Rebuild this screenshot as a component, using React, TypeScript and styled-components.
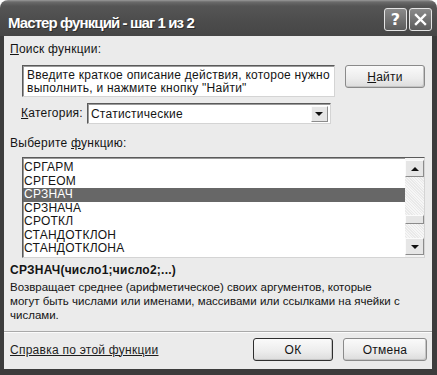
import React from 'react';
import styled, { createGlobalStyle, css } from 'styled-components';

const GlobalStyle = createGlobalStyle`
  html, body {
    margin: 0;
    padding: 0;
    background: #ffffff;
  }
  body {
    font-family: 'Liberation Sans', Arial, sans-serif;
    color: #141414;
  }
`;

const functionList = ['СРГАРМ', 'СРГЕОМ', 'СРЗНАЧ', 'СРЗНАЧА', 'СРОТКЛ', 'СТАНДОТКЛОН', 'СТАНДОТКЛОНА'];
const selectedFunction = 'СРЗНАЧ';

const descriptionLines = [
  'Возвращает среднее (арифметическое) своих аргументов, которые',
  'могут быть числами или именами, массивами или ссылками на ячейки с',
  'числами.',
];

const App = () => {
  return (
    <>
      <GlobalStyle />
      <Window>
        <TitleBar>
          <Title>Мастер функций - шаг 1 из 2</Title>
          <TitleButtons>
            <TitleButton>?</TitleButton>
            <TitleButton>
              <svg width="13" height="13" viewBox="0 0 13 13">
                <path d="M2 2 L11 11 M11 2 L2 11" stroke="#fff" strokeWidth="2.4" strokeLinecap="square" />
              </svg>
            </TitleButton>
          </TitleButtons>
        </TitleBar>
        <Frame>
          <Client>
            <Label>
              <Key>П</Key>оиск функции:
            </Label>
            <SearchRow>
              <SearchBox>
                Введите краткое описание действия, которое нужно выполнить, и нажмите кнопку "Найти"
              </SearchBox>
              <Button>
                <Key>Н</Key>айти
              </Button>
            </SearchRow>
            <CategoryRow>
              <Label>
                <Key>К</Key>атегория:
              </Label>
              <Select>
                <SelectValue>Статистические</SelectValue>
                <ArrowButton>
                  <Triangle $down />
                </ArrowButton>
              </Select>
            </CategoryRow>
            <ListLabel>
              Выберите <Key>ф</Key>ункцию:
            </ListLabel>
            <ListBox>
              <Items>
                {functionList.map((name) => (
                  <Item key={name} $selected={name === selectedFunction}>
                    {name}
                  </Item>
                ))}
              </Items>
              <ScrollBar>
                <ScrollButton>
                  <Triangle />
                </ScrollButton>
                <Track>
                  <Thumb />
                </Track>
                <ScrollButton>
                  <Triangle $down />
                </ScrollButton>
              </ScrollBar>
            </ListBox>
            <Signature>СРЗНАЧ(число1;число2;...)</Signature>
            <Description>
              {descriptionLines.map((line) => (
                <DescriptionLine key={line}>{line}</DescriptionLine>
              ))}
            </Description>
            <Separator />
            <Footer>
              <HelpLink>Справка по этой функции</HelpLink>
              <Buttons>
                <Button $default>ОК</Button>
                <Button $wide>Отмена</Button>
              </Buttons>
            </Footer>
          </Client>
        </Frame>
      </Window>
    </>
  );
};

export default App;

const sunken = css`
  box-sizing: border-box;
  background: #ffffff;
  border-top: 1px solid #5a5a5a;
  border-left: 1px solid #5a5a5a;
  border-right: 1px solid #d4d4d4;
  border-bottom: 1px solid #d4d4d4;
  box-shadow: inset 1px 1px 0 #9a9a9a;
`;

const raised = css`
  box-sizing: border-box;
  background: #e6e6e6;
  border-top: 1px solid #fbfbfb;
  border-left: 1px solid #fbfbfb;
  border-right: 1px solid #8c8c8c;
  border-bottom: 1px solid #8c8c8c;
`;

const Window = styled.div`
  width: 437px;
  height: 375px;
  display: flex;
  flex-direction: column;
  background: #ffffff;
`;

const TitleBar = styled.div`
  height: 36px;
  flex-shrink: 0;
  display: flex;
  align-items: center;
  justify-content: space-between;
  padding: 3px 5px 0 8px;
  box-sizing: border-box;
  border-radius: 8px 8px 0 0;
  background: linear-gradient(#9a9a9a 0, #6a6a6a 2px, #555555 6px, #4c4c4c 60%, #464646 100%);
`;

const Title = styled.div`
  margin-top: 6px;
  font-family: 'Liberation Sans', Arial, sans-serif;
  font-weight: bold;
  font-size: 15px;
  letter-spacing: -0.9px;
  color: #ffffff;
  text-shadow: 1px 1px 0 #2e2e2e;
`;

const TitleButtons = styled.div`
  display: flex;
  gap: 2px;
`;

const TitleButton = styled.div`
  width: 23px;
  height: 23px;
  box-sizing: border-box;
  display: flex;
  align-items: center;
  justify-content: center;
  border: 1px solid #e4e4e4;
  border-radius: 3px;
  background: linear-gradient(#8a8a8a, #5c5c5c);
  color: #ffffff;
  font-family: 'DejaVu Sans', sans-serif;
  font-weight: bold;
  font-size: 16px;
`;

const Frame = styled.div`
  flex: 1;
  display: flex;
  background: #3c3c3c;
  padding: 0 5px 6px 4px;
`;

const Client = styled.div`
  flex: 1;
  display: flex;
  flex-direction: column;
  background: #ebebeb;
  padding: 6px 7px 0 6px;
  font-size: 12px;
  letter-spacing: 0.25px;
`;

const Label = styled.div`
  font-size: 12px;
  line-height: 15px;
`;

const Key = styled.span`
  text-decoration: underline;
`;

const SearchRow = styled.div`
  display: flex;
  align-items: flex-start;
  gap: 10px;
  margin: 8px 0 0 12px;
`;

const SearchBox = styled.div`
  ${sunken};
  width: 313px;
  height: 32px;
  padding: 3px 4px;
  font-size: 12px;
  line-height: 13px;
`;

const Button = styled.div<{ $default?: boolean; $wide?: boolean }>`
  width: ${(p) => (p.$wide ? 84 : 80)}px;
  height: 23px;
  box-sizing: border-box;
  display: flex;
  align-items: center;
  justify-content: center;
  font-size: 12px;
  border-radius: 3px;
  border: 1px solid ${(p) => (p.$default ? '#2e2e2e' : '#8a8a8a')};
  background: linear-gradient(#fafafa, #ececec 60%, #dcdcdc);
  box-shadow: inset -1px -1px 0 #c4c4c4;
`;

const CategoryRow = styled.div`
  display: flex;
  align-items: center;
  gap: 4px;
  margin: 6px 0 0 11px;
`;

const Select = styled.div`
  ${sunken};
  width: 244px;
  height: 21px;
  display: flex;
  align-items: center;
  padding: 0 2px 0 3px;
`;

const SelectValue = styled.div`
  flex: 1;
  font-size: 12px;
`;

const ArrowButton = styled.div`
  ${raised};
  width: 17px;
  height: 16px;
  display: flex;
  align-items: center;
  justify-content: center;
`;

const Triangle = styled.div<{ $down?: boolean }>`
  width: 0;
  height: 0;
  border-left: 4px solid transparent;
  border-right: 4px solid transparent;
  ${(p) =>
    p.$down
      ? css`
          border-top: 4px solid #111;
        `
      : css`
          border-bottom: 4px solid #111;
        `}
`;

const ListLabel = styled(Label)`
  margin-top: 12px;
`;

const ListBox = styled.div`
  ${sunken};
  display: flex;
  width: 403px;
  height: 101px;
  margin: 6px 0 0 12px;
`;

const Items = styled.div`
  flex: 1;
  padding-top: 3px;
`;

const Item = styled.div<{ $selected?: boolean }>`
  height: 13.5px;
  line-height: 13.5px;
  padding-left: 1px;
  font-size: 12px;
  background: ${(p) => (p.$selected ? '#676767' : 'transparent')};
  color: ${(p) => (p.$selected ? '#ffffff' : '#141414')};
`;

const ScrollBar = styled.div`
  width: 19px;
  display: flex;
  flex-direction: column;
  padding: 2px 0;
  background: #f3f3f3;
`;

const ScrollButton = styled.div`
  ${raised};
  height: 17px;
  display: flex;
  align-items: center;
  justify-content: center;
`;

const Track = styled.div`
  flex: 1;
  position: relative;
  background: repeating-linear-gradient(45deg, #f6f6f6 0 1px, #e9e9e9 1px 2px);
`;

const Thumb = styled.div`
  ${raised};
  position: absolute;
  left: 0;
  right: 0;
  top: 38px;
  height: 9px;
`;

const Signature = styled.div`
  margin-top: 5px;
  font-weight: bold;
  font-size: 12px;
  line-height: 15px;
`;

const Description = styled.div`
  margin-top: 2px;
  font-size: 11.5px;
  line-height: 14px;
  letter-spacing: 0;
`;

const DescriptionLine = styled.div`
  white-space: nowrap;
`;

const Separator = styled.div`
  margin: 9px -7px 0 -6px;
  border-top: 1px solid #a9a9a9;
  border-bottom: 1px solid #fbfbfb;
`;

const Footer = styled.div`
  display: flex;
  align-items: center;
  justify-content: space-between;
  margin-top: 5px;
  margin-right: -2px;
`;

const HelpLink = styled.span`
  font-size: 12px;
  text-decoration: underline;
  color: #1e1e1e;
`;

const Buttons = styled.div`
  display: flex;
  gap: 10px;
`;
